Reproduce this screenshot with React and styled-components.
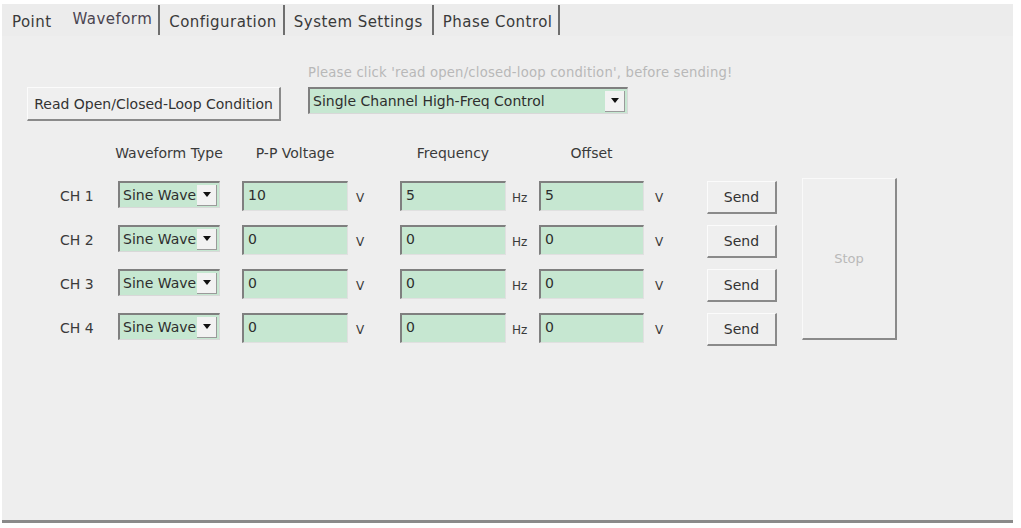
import React from 'react';
import styled, { createGlobalStyle } from 'styled-components';

const Global = createGlobalStyle`
  html, body { margin: 0; padding: 0; background: #ffffff; }
  body { font-family: "DejaVu Sans", Tahoma, sans-serif; }
`;

const Frame = styled.div`
  margin: 4px 0 0 2px;
  width: 1011px;
  height: 516px;
  background: #eeeeee;
  border-bottom: 3px solid #8a8a8a;
  display: flex;
  flex-direction: column;
  font-size: 14px;
  color: #3a3a3a;
`;

const TabBar = styled.div`
  height: 32px;
  box-sizing: border-box;
  padding: 3px 0 0 10px;
  display: flex;
  align-items: center;
  background: #ececec;
  font-size: 15px;
  letter-spacing: 0.45px;
`;

const Tab = styled.div`
  padding: ${p => (p.$active ? '0 6px 5px 0' : '0 6px 0 0')};
  margin-right: ${p => p.$gap || 0}px;
  color: ${p => (p.$active ? '#4a4450' : '#3a3a3a')};
  white-space: nowrap;
`;

const TabSep = styled.div`
  width: 2px;
  height: 30px;
  margin-top: -3px;
  background: #6e6e6e;
  margin-right: 9px;
`;

const Content = styled.div`
  padding: 29px 0 0 25px;
  display: flex;
  flex-direction: column;
`;

const TopGrid = styled.div`
  display: grid;
  grid-template-columns: 254px 320px;
  column-gap: 27px;
  row-gap: 6px;
  align-items: center;
`;

const Hint = styled.div`
  grid-column: 2;
  font-size: 13.2px;
  line-height: 16px;
  color: #b8b8b8;
  white-space: nowrap;
  letter-spacing: 0.2px;
`;

const RaisedButton = styled.button`
  font-family: inherit;
  font-size: 14px;
  color: #333;
  background: #efefef;
  border-style: solid;
  border-width: 1px 2px 2px 1px;
  border-color: #fbfbfb #8a8a8a #8a8a8a #fbfbfb;
  padding: 0;
  height: ${p => p.$h || 34}px;
  width: ${p => p.$w || 'auto'};
  white-space: nowrap;
`;

const SelectBox = styled.div`
  width: ${p => p.$w}px;
  height: 27px;
  box-sizing: border-box;
  display: flex;
  align-items: center;
  background: #c6e7d1;
  border-style: solid;
  border-width: 2px 1px 1px 2px;
  border-color: #7f7f7f #d8d8d8 #d8d8d8 #7f7f7f;
  align-self: start;
`;

const SelectText = styled.span`
  flex: 1;
  overflow: hidden;
  white-space: nowrap;
  padding-left: 3px;
  color: #2e2e2e;
`;

const ArrowBox = styled.div`
  width: 20px;
  height: 21px;
  flex: none;
  margin-right: 2px;
  background: #f2f2f2;
  border-right: 1px solid #9a9a9a;
  border-bottom: 1px solid #9a9a9a;
  box-sizing: border-box;
  display: flex;
  align-items: center;
  justify-content: center;
`;

const Arrow = styled.div`
  width: 0;
  height: 0;
  border-left: 4px solid transparent;
  border-right: 4px solid transparent;
  border-top: 5px solid #111;
`;

const COLS = '58px 102px 22px 106px 52px 106px 33px 105px 63px 70px 25px 95px';

const HeadGrid = styled.div`
  margin: 24px 0 0 33px;
  display: grid;
  grid-template-columns: ${COLS};
  line-height: 16px;
`;

const Head = styled.div`
  grid-column: ${p => p.$col};
  justify-self: center;
  white-space: nowrap;
`;

const ChanGrid = styled.div`
  margin: 20px 0 0 33px;
  display: grid;
  grid-template-columns: ${COLS};
  grid-auto-rows: 30px;
  row-gap: 14px;
`;

const ChLabel = styled.div`
  grid-column: 1;
  align-self: center;
  white-space: nowrap;
`;

const SelectCell = styled.div`
  grid-column: 2;
  display: flex;
`;

const Field = styled.div`
  grid-column: ${p => p.$col};
  box-sizing: border-box;
  height: 30px;
  background: #c6e7d1;
  border-style: solid;
  border-width: 2px 1px 1px 2px;
  border-color: #7f7f7f #e0e0e0 #e0e0e0 #7f7f7f;
  padding: 4px 0 0 4px;
  color: #2e2e2e;
`;

const Unit = styled.div`
  grid-column: ${p => p.$col};
  align-self: center;
  padding-left: ${p => p.$pad}px;
  font-size: 12px;
  padding-top: 3px;
`;

const SendCell = styled.div`
  grid-column: 10;
  display: flex;
`;

const StopButton = styled.div`
  grid-column: 12;
  grid-row: 1 / span 4;
  margin: -3px 0 3px 0;
  background: #efefef;
  border-style: solid;
  border-width: 1px 2px 2px 1px;
  border-color: #f9f9f9 #8a8a8a #8a8a8a #f9f9f9;
  display: flex;
  align-items: center;
  justify-content: center;
  color: #b9b9b9;
  font-size: 13px;
`;

const channels = [
  { name: 'CH 1', pp: '10', freq: '5', off: '5' },
  { name: 'CH 2', pp: '0', freq: '0', off: '0' },
  { name: 'CH 3', pp: '0', freq: '0', off: '0' },
  { name: 'CH 4', pp: '0', freq: '0', off: '0' },
];

function Select({ w, children }) {
  return (
    <SelectBox $w={w}>
      <SelectText>{children}</SelectText>
      <ArrowBox><Arrow /></ArrowBox>
    </SelectBox>
  );
}

export default function App() {
  return (
    <>
      <Global />
      <Frame>
        <TabBar>
          <Tab $gap={15}>Point</Tab>
          <Tab $active>Waveform</Tab>
          <TabSep />
          <Tab>Configuration</Tab>
          <TabSep />
          <Tab $gap={3}>System Settings</Tab>
          <TabSep />
          <Tab>Phase Control</Tab>
          <TabSep />
        </TabBar>
        <Content>
          <TopGrid>
            <Hint>Please click 'read open/closed-loop condition', before sending!</Hint>
            <RaisedButton>Read Open/Closed-Loop Condition</RaisedButton>
            <Select w={320}>Single Channel High-Freq Control</Select>
          </TopGrid>
          <HeadGrid>
            <Head $col={2}>Waveform Type</Head>
            <Head $col={4}>P-P Voltage</Head>
            <Head $col={6}>Frequency</Head>
            <Head $col={8}>Offset</Head>
          </HeadGrid>
          <ChanGrid>
            {channels.map((c, i) => (
              <React.Fragment key={c.name}>
                <ChLabel style={{ gridRow: i + 1 }}>{c.name}</ChLabel>
                <SelectCell style={{ gridRow: i + 1 }}>
                  <Select w={102}>Sine Wave</Select>
                </SelectCell>
                <Field $col={4} style={{ gridRow: i + 1 }}>{c.pp}</Field>
                <Unit $col={5} $pad={8} style={{ gridRow: i + 1 }}>V</Unit>
                <Field $col={6} style={{ gridRow: i + 1 }}>{c.freq}</Field>
                <Unit $col={7} $pad={6} style={{ gridRow: i + 1 }}>Hz</Unit>
                <Field $col={8} style={{ gridRow: i + 1 }}>{c.off}</Field>
                <Unit $col={9} $pad={11} style={{ gridRow: i + 1 }}>V</Unit>
                <SendCell style={{ gridRow: i + 1 }}>
                  <RaisedButton $h={33} $w="70px">Send</RaisedButton>
                </SendCell>
              </React.Fragment>
            ))}
            <StopButton>Stop</StopButton>
          </ChanGrid>
        </Content>
      </Frame>
    </>
  );
}
